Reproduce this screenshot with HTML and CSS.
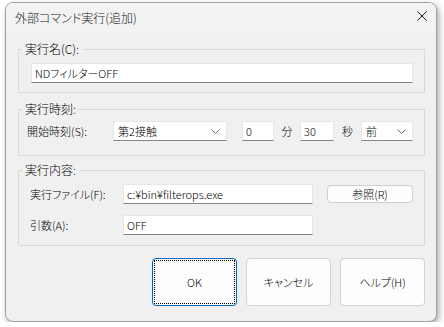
FILE: index.html
```
<!DOCTYPE html>
<html>
<head>
	<title>外部コマンド実行(追加)</title>
	<link rel="stylesheet" href="styles.css">
</head>
<body>
	<div class="window">
		<div class="titlebar">
			<span class="title">外部コマンド実行(追加)</span>
			<svg class="close" width="10" height="10" viewBox="0 0 10 10"><path d="M0.5 0.5L9.5 9.5M9.5 0.5L0.5 9.5" stroke="#1a1a1a" stroke-width="1"/></svg>
		</div>
		<div class="content">
			<fieldset class="group">
				<legend>実行名(C):</legend>
				<div class="group-body body-name">
					<div class="field">NDフィルターOFF</div>
				</div>
			</fieldset>

			<fieldset class="group group-time">
				<legend>実行時刻:</legend>
				<div class="group-body body-time">
					<span class="label label-start">開始時刻(S):</span>
					<div class="select select-contact">
						<span>第2接触</span>
						<svg width="9" height="5" viewBox="0 0 9 5"><path d="M0.5 0.5L4.5 4.5L8.5 0.5" fill="none" stroke="#707070" stroke-width="1"/></svg>
					</div>
					<div class="field field-min">0</div>
					<span class="unit">分</span>
					<div class="field field-sec">30</div>
					<span class="unit unit-sec">秒</span>
					<div class="select select-when">
						<span>前</span>
						<svg width="9" height="5" viewBox="0 0 9 5"><path d="M0.5 0.5L4.5 4.5L8.5 0.5" fill="none" stroke="#707070" stroke-width="1"/></svg>
					</div>
				</div>
			</fieldset>

			<fieldset class="group group-run">
				<legend>実行内容:</legend>
				<div class="group-body body-run">
					<span class="label">実行ファイル(F):</span>
					<div class="field">c:¥bin¥filterops.exe</div>
					<button class="small-button">参照(R)</button>
					<span class="label">引数(A):</span>
					<div class="field">OFF</div>
				</div>
			</fieldset>

			<div class="buttons">
				<button class="button default"><span class="focus">OK</span></button>
				<button class="button">キャンセル</button>
				<button class="button">ヘルプ(H)</button>
			</div>
		</div>
	</div>
</body>
</html>
```

FILE: styles.css
```
body {
	margin: 0;
	background-color: #fff;
	font-family: "Noto Sans CJK JP", "Liberation Sans", sans-serif;
	font-size: 11px;
	font-weight: 300;
	font-feature-settings: "palt";
	color: #000;
}
.window {
	box-sizing: border-box;
	margin: 2px 0 0 5px;
	width: 432px;
	height: 320px;
	background-color: #f0f0f0;
	border: 1px solid #a3a3a3;
	border-radius: 8px;
	box-shadow: 2px 3px 6px rgba(0,0,0,0.35);
	overflow: hidden;
}
.titlebar {
	display: flex;
	align-items: center;
	justify-content: space-between;
	height: 29px;
	padding: 0 9px 0 9px;
	background-color: #f3f3f3;
}
.title {
	color: #1a1a1a;
	font-size: 12px;
	margin-top: -1px;
}
.close {
	margin-top: -3px;
}
.content {
	padding: 9px 11px 0 12px;
}
.group {
	margin: 0;
	border: 1px solid #dadada;
	padding: 0;
	min-width: 0;
}
.group legend {
	margin-left: 3px;
	padding: 0 3px;
	line-height: 16px;
	height: 16px;
	font-size: 12px;
}
.field {
	box-sizing: border-box;
	height: 20px;
	line-height: 19px;
	padding: 0 3px;
	background-color: #fff;
	border: 1px solid #e6e6e6;
	border-bottom-color: #868686;
	white-space: nowrap;
	overflow: hidden;
}
.body-name {
	padding: 6px 11px 9px 12px;
}
.group-time {
	margin-top: 8px;
}
.body-time {
	display: flex;
	align-items: center;
	height: 20px;
	padding: 4px 11px 14px 8px;
}
.label-start {
	width: 86px;
}
.select {
	box-sizing: border-box;
	display: flex;
	align-items: center;
	justify-content: space-between;
	height: 20px;
	padding: 0 6px 0 4px;
	background-color: #fff;
	border: 1px solid #e6e6e6;
	border-bottom-color: #868686;
}
.select-contact {
	width: 114px;
}
.select-when {
	width: 52px;
}
.field-min {
	width: 32px;
	margin-left: 15px;
}
.field-sec {
	width: 34px;
}
.unit {
	width: 26px;
	text-align: center;
}
.unit-sec {
	width: 27px;
}
.group-run {
	margin-top: 6px;
}
.body-run {
	display: grid;
	grid-template-columns: 93px 190px 1fr;
	row-gap: 11px;
	align-items: center;
	padding: 6px 11px 10px 11px;
}
.small-button {
	box-sizing: border-box;
	justify-self: end;
	width: 86px;
	height: 18px;
	padding: 0;
	font-family: inherit;
	font-size: 11px;
	font-weight: inherit;
	font-feature-settings: "palt";
	background-color: #fdfdfd;
	border: 1px solid #cfcfcf;
	border-radius: 4px;
	color: #000;
}
.buttons {
	display: flex;
	justify-content: flex-end;
	gap: 9px;
	margin-top: 12px;
}
.button {
	box-sizing: border-box;
	width: 85px;
	height: 48px;
	padding: 0;
	font-family: inherit;
	font-size: 11px;
	font-weight: inherit;
	font-feature-settings: "palt";
	background-color: #fdfdfd;
	border: 1px solid #d2d2d2;
	border-radius: 4px;
	color: #000;
}
.default {
	border: 1px solid #0067c0;
	padding: 1px;
}
.focus {
	display: flex;
	align-items: center;
	justify-content: center;
	height: 100%;
	border: 1px dotted #000;
	box-sizing: border-box;
}
```
